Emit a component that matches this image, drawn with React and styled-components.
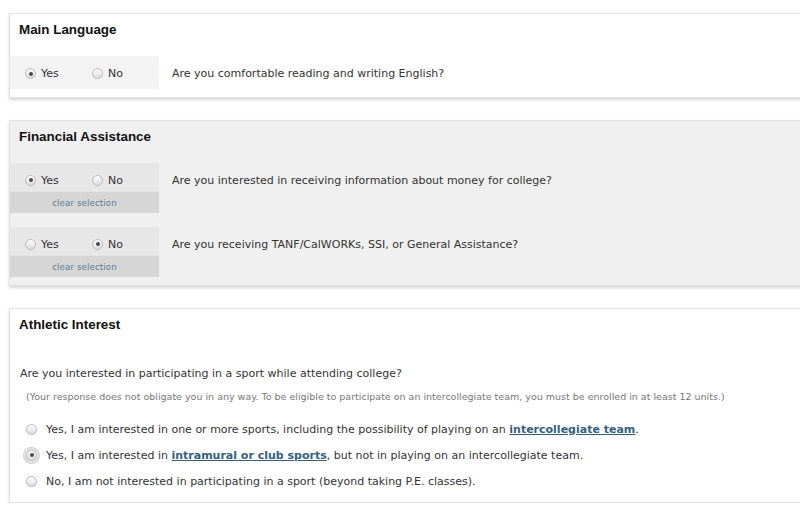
import React from "react";
import styled, { createGlobalStyle } from "styled-components";

const GlobalStyle = createGlobalStyle`
  html, body {
    margin: 0;
    padding: 0;
    background: #fff;
    overflow-x: hidden;
  }
  body {
    font-family: "DejaVu Sans", Verdana, sans-serif;
    color: #333;
  }
`;

const Page = styled.div`
  display: flex;
  flex-direction: column;
  gap: 22px;
  padding: 13px 0 0 9px;
  width: 820px;
`;

const Card = styled.section`
  background: ${(p) => (p.$shaded ? "#f0f0f0" : "#fff")};
  border: 1px solid #e2e2e2;
  box-shadow: 0 2px 3px rgba(0, 0, 0, 0.16);
  padding-bottom: 8px;
`;

const CardTitle = styled.h2`
  margin: 0;
  height: 42px;
  box-sizing: border-box;
  padding: 8px 9px 0;
  font-family: "Liberation Sans", Arial, sans-serif;
  font-size: 13.4px;
  line-height: 16px;
  font-weight: bold;
  color: #111;
`;

const QuestionRow = styled.div`
  display: flex;
  align-items: flex-start;
  & + & {
    margin-top: 14px;
  }
`;

const ChoiceBox = styled.div`
  width: 149px;
  flex-shrink: 0;
  display: flex;
  flex-direction: column;
  background: ${(p) => (p.$shaded ? "#e7e7e7" : "#f3f3f3")};
`;

const Choices = styled.div`
  display: flex;
  align-items: center;
  height: ${(p) => (p.$tall ? "33px" : "28px")};
  box-sizing: border-box;
  padding: ${(p) => (p.$tall ? "2px" : "6px")} 0 0 15px;
  font-size: 11px;
`;

const Choice = styled.label`
  display: flex;
  align-items: center;
  gap: 5px;
  width: ${(p) => p.$w || "auto"};
  color: #333;
`;

const ClearBar = styled.div`
  height: 21px;
  background: #d6d6d6;
  border-top: 1px solid #e2e2e2;
  display: flex;
  align-items: center;
  justify-content: center;
  font-size: 8.7px;
  letter-spacing: 0.1px;
  color: #5d7a94;
`;

const QuestionText = styled.div`
  padding-left: 13px;
  font-size: 11px;
  line-height: 14px;
  padding-top: 11px;
  color: #333;
`;

const Radio = styled.span`
  position: relative;
  display: inline-block;
  flex-shrink: 0;
  width: 11px;
  height: 11px;
  box-sizing: border-box;
  border-radius: 50%;
  border: 1px solid #b9b9b9;
  background: linear-gradient(#ffffff, #dcdcdc);
  box-shadow: ${(p) =>
    p.$focus ? "0 0 0 2px #e4e4e4, 0 0 0 3px #cfcfcf" : "none"};
  &::after {
    content: "";
    display: ${(p) => (p.$on ? "block" : "none")};
    position: absolute;
    left: 50%;
    top: 50%;
    width: 4px;
    height: 4px;
    margin: -2px 0 0 -2px;
    border-radius: 50%;
    background: #4a4a4a;
  }
`;

const AthleticBody = styled.div`
  padding: 15px 10px 0;
`;

const AthleticQuestion = styled.div`
  font-size: 11px;
  line-height: 16px;
  color: #333;
`;

const Note = styled.div`
  margin-top: 8px;
  padding-left: 6px;
  font-size: 9.5px;
  line-height: 14px;
  color: #777;
`;

const OptionList = styled.div`
  margin-top: 12px;
  display: flex;
  flex-direction: column;
`;

const Option = styled.label`
  display: flex;
  align-items: center;
  gap: 9px;
  height: 26px;
  padding-left: 6px;
  font-size: 11px;
  color: #333;
`;

const Link = styled.a`
  color: #35607f;
  font-weight: bold;
  text-decoration: underline;
`;

function YesNo({ value, tall, shaded, clear }) {
  return (
    <ChoiceBox $shaded={shaded}>
      <Choices $tall={tall}>
        <Choice $w="67px">
          <Radio $on={value === "yes"} />
          Yes
        </Choice>
        <Choice>
          <Radio $on={value === "no"} />
          No
        </Choice>
      </Choices>
      {clear && <ClearBar>clear selection</ClearBar>}
    </ChoiceBox>
  );
}

export default function App() {
  return (
    <>
      <GlobalStyle />
      <Page>
        <Card>
          <CardTitle>Main Language</CardTitle>
          <QuestionRow>
            <YesNo value="yes" tall />
            <QuestionText>Are you comfortable reading and writing English?</QuestionText>
          </QuestionRow>
        </Card>

        <Card $shaded>
          <CardTitle>Financial Assistance</CardTitle>
          <QuestionRow>
            <YesNo value="yes" shaded clear />
            <QuestionText>
              Are you interested in receiving information about money for college?
            </QuestionText>
          </QuestionRow>
          <QuestionRow>
            <YesNo value="no" shaded clear />
            <QuestionText>
              Are you receiving TANF/CalWORKs, SSI, or General Assistance?
            </QuestionText>
          </QuestionRow>
        </Card>

        <Card>
          <CardTitle>Athletic Interest</CardTitle>
          <AthleticBody>
            <AthleticQuestion>
              Are you interested in participating in a sport while attending college?
            </AthleticQuestion>
            <Note>
              (Your response does not obligate you in any way. To be eligible to
              participate on an intercollegiate team, you must be enrolled in at least
              12 units.)
            </Note>
            <OptionList>
              <Option>
                <Radio />
                <span>
                  Yes, I am interested in one or more sports, including the possibility
                  of playing on an <Link href="#">intercollegiate team</Link>.
                </span>
              </Option>
              <Option>
                <Radio $on $focus />
                <span>
                  Yes, I am interested in <Link href="#">intramural or club sports</Link>,
                  but not in playing on an intercollegiate team.
                </span>
              </Option>
              <Option>
                <Radio />
                <span>
                  No, I am not interested in participating in a sport (beyond taking
                  P.E. classes).
                </span>
              </Option>
            </OptionList>
          </AthleticBody>
        </Card>
      </Page>
    </>
  );
}
